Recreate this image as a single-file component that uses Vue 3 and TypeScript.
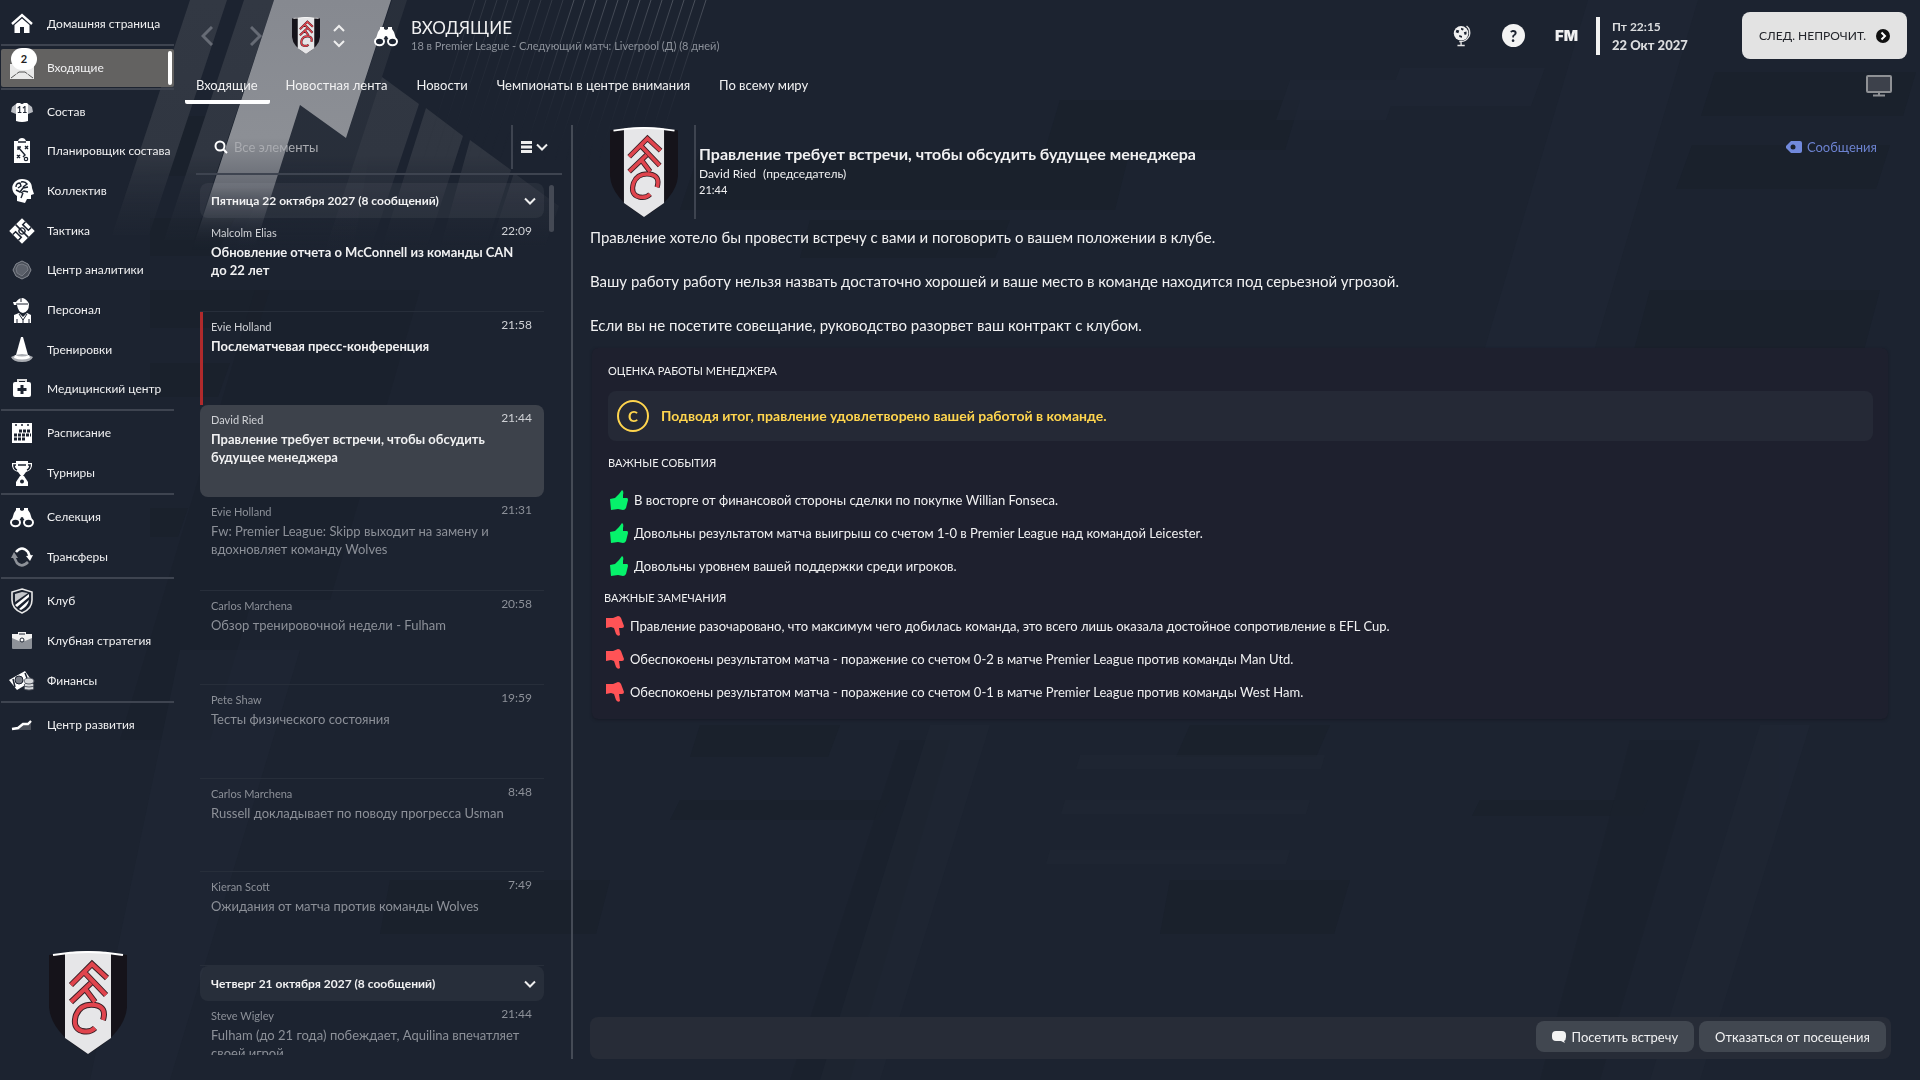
<script setup lang="ts">
import { ref } from 'vue'

interface NavItem { icon: string; label: string; badge?: number }
interface Mail { from: string; time: string; title: string; state: 'unread' | 'urgent' | 'open' | 'read' }
interface MailGroup { title: string; mails: Mail[] }

const navGroups: NavItem[][] = [
  [{ icon: 'home', label: 'Домашняя страница' }],
  [{ icon: 'inbox', label: 'Входящие', badge: 2 }],
  [
    { icon: 'shirt', label: 'Состав' },
    { icon: 'planner', label: 'Планировщик состава' },
    { icon: 'head', label: 'Коллектив' },
    { icon: 'tactics', label: 'Тактика' },
    { icon: 'data', label: 'Центр аналитики' },
    { icon: 'staff', label: 'Персонал' },
    { icon: 'cone', label: 'Тренировки' },
    { icon: 'medical', label: 'Медицинский центр' },
  ],
  [{ icon: 'calendar', label: 'Расписание' }, { icon: 'cup', label: 'Турниры' }],
  [{ icon: 'binoculars', label: 'Селекция' }, { icon: 'transfers', label: 'Трансферы' }],
  [
    { icon: 'club', label: 'Клуб' },
    { icon: 'briefcase', label: 'Клубная стратегия' },
    { icon: 'money', label: 'Финансы' },
  ],
  [{ icon: 'growth', label: 'Центр развития' }],
]

const tabs = ['Входящие', 'Новостная лента', 'Новости', 'Чемпионаты в центре внимания', 'По всему миру']
const activeNav = ref('Входящие')
const activeTab = ref('Входящие')
const query = ref('')

const mailGroups: MailGroup[] = [
  {
    title: 'Пятница 22 октября 2027 (8 сообщений)',
    mails: [
      { from: 'Malcolm Elias', time: '22:09', title: 'Обновление отчета о McConnell из команды CAN до 22 лет', state: 'unread' },
      { from: 'Evie Holland', time: '21:58', title: 'Послематчевая пресс-конференция', state: 'urgent' },
      { from: 'David Ried', time: '21:44', title: 'Правление требует встречи, чтобы обсудить будущее менеджера', state: 'open' },
      { from: 'Evie Holland', time: '21:31', title: 'Fw: Premier League: Skipp выходит на замену и вдохновляет команду Wolves', state: 'read' },
      { from: 'Carlos Marchena', time: '20:58', title: 'Обзор тренировочной недели - Fulham', state: 'read' },
      { from: 'Pete Shaw', time: '19:59', title: 'Тесты физического состояния', state: 'read' },
      { from: 'Carlos Marchena', time: '8:48', title: 'Russell докладывает по поводу прогресса Usman', state: 'read' },
      { from: 'Kieran Scott', time: '7:49', title: 'Ожидания от матча против команды Wolves', state: 'read' },
    ],
  },
  {
    title: 'Четверг 21 октября 2027 (8 сообщений)',
    mails: [
      { from: 'Steve Wigley', time: '21:44', title: 'Fulham (до 21 года) побеждает, Aquilina впечатляет своей игрой', state: 'read' },
    ],
  },
]

const paragraphs = [
  'Правление хотело бы провести встречу с вами и поговорить о вашем положении в клубе.',
  'Вашу работу работу нельзя назвать достаточно хорошей и ваше место в команде находится под серьезной угрозой.',
  'Если вы не посетите совещание, руководство разорвет ваш контракт с клубом.',
]
const praises = [
  'В восторге от финансовой стороны сделки по покупке Willian Fonseca.',
  'Довольны результатом матча выигрыш со счетом 1-0 в Premier League над командой Leicester.',
  'Довольны уровнем вашей поддержки среди игроков.',
]
const complaints = [
  'Правление разочаровано, что максимум чего добилась команда, это всего лишь оказала достойное сопротивление в EFL Cup.',
  'Обеспокоены результатом матча - поражение со счетом 0-2 в матче Premier League против команды Man Utd.',
  'Обеспокоены результатом матча - поражение со счетом 0-1 в матче Premier League против команды West Ham.',
]

const thinLines = Array.from({ length: 22 }, (_, i) => 706 - i * 11)

const bino = '<path d="M7 4h4v2l2 1h0l2-1V4h4v2l2 3 2.500 8h-8v-2h-5v2h-8L5 9l2-3z" fill="#fff"/><g fill="#1c2330" stroke="#fff" stroke-width="2"><ellipse cx="6.500" cy="18.500" rx="4.500" ry="3.700"/><ellipse cx="19.500" cy="18.500" rx="4.500" ry="3.700"/></g><circle cx="13" cy="14.500" r="1.500" fill="#1c2330"/>'
const icons: Record<string, string> = {
  home: '<path d="M3 13 13 4l10 9" fill="none" stroke="#fff" stroke-width="2.400"/><path d="M5.500 14 13 7.500l7.500 6.500v8H15v-6h-4v6H5.500z" fill="#fff"/>',
  inbox: '<path d="M1 9h24v15H1z" fill="#e9e9e9"/><path d="m2 23 8-6m14 6-8-6M10 17h6" stroke="#555" fill="none" stroke-dasharray="6 1"/>',
  shirt: '<path d="M8 4h3q2 2 4 0h3l1 1v17q-6 2-12 0V5z" fill="#fff"/><path d="M7 5 3 8l-1 5 5 2zM19 5l4 3 1 5-5 2z" fill="#b9bcc2"/><text x="13" y="14" text-anchor="middle" font-size="9" font-weight="700" font-family="Lato, sans-serif" fill="#1c2330">11</text>',
  planner: '<path d="M5 3h4q1-3 4-3t4 3h4v22H5z" fill="#fff"/><path d="M9 4h8" stroke="#1c2330" stroke-width="1.500"/><path d="m9 9 7 8-2 2M9 12V9h3m4-1 3 3m0-3-3 3M8 17l3 3m0-3-3 3" stroke="#1c2330" stroke-width="1.400" fill="none"/><circle cx="17" cy="21" r="1.700" fill="none" stroke="#1c2330" stroke-width="1.200"/>',
  head: '<path d="M13 1c7 0 10 4 10 9l2 6-3 1v4h-4l-2 4-8-2v-5C-1 12 4 1 13 1z" fill="#fff"/><g fill="none" stroke="#1c2330" stroke-width="1.400"><path d="M7 9q0-4 4-4l1 3-3 2M12 4q4-1 6 2l-4 3M7 12l4 2 3-4 5-1M12 15l3-2 4 1M14 15l-2 5"/></g>',
  tactics: '<g transform="rotate(-45 13 13)"><path d="M4 4h18v18H4z" fill="#fff"/><path d="M13 4v18M4 9h4v8H4m18-8h-4v8h4" stroke="#1c2330" stroke-width="1.500" fill="none"/><circle cx="13" cy="13" r="3" stroke="#1c2330" fill="none" stroke-width="1.300"/></g>',
  data: '<path d="m13 4 6 3 3 6-3 6-6 3-6-3-3-6 3-6z" fill="#4a4f59" stroke="#878b93"/><path d="m13 7 5 2 1 4-6 6-5-3-1-4 2-4z" fill="#5b606a" stroke="#777b84"/>',
  staff: '<path d="M7 5q6-8 12 0l1 2q0 8-6 9-5-1-6-8H5l-1-3z" fill="#fff"/><path d="M7 7h12M12 1v4" stroke="#1c2330"/><path d="M5 26V18l5-2 4 4 4-4 4 2v8z" fill="#fff"/><path d="m10 17 4 6 4-6m-4 6v3M8 22v4m12-4v4" stroke="#1c2330" fill="none"/>',
  cone: '<path d="M12 0h2l5 18H7z" fill="#fff"/><path d="M2 20q5-3 11-3t11 3q-2 5-11 5T2 20z" fill="#a9acb2"/><path d="M6 18q7 3 14 0l1 3q-8 3-16 0z" fill="#fff"/>',
  medical: '<path d="M9 7V4h8v3" stroke="#ddd" stroke-width="2" fill="none"/><rect x="4" y="6" width="18" height="15" rx="2" fill="#fff"/><path d="M13 9v9m-4.500-4.500h9" stroke="#1c2330" stroke-width="3"/>',
  calendar: '<path d="M3 3h20v20H3z" fill="#fff"/><path d="M6 5h2m4 0h2m4 0h2" stroke="#1c2330" stroke-width="1.500"/><g stroke="#1c2330" stroke-width="3" stroke-dasharray="3 1"><path d="M10 11h12M5 15h17M5 19h11"/></g>',
  cup: '<path d="M7 1h12v2h4q1 7-6 9l-3 4h-2l-3-4Q2 10 3 3h4z" fill="#fff"/><path d="M7 5H5q0 4 3 5m11-5h2q0 4-3 5M9 5h8" fill="none" stroke="#1c2330" stroke-width="1.700"/><path d="M11 16h4l4 6v4H7v-4z" fill="#fff"/><circle cx="13" cy="21.500" r="2" fill="#1c2330"/>',
  binoculars: bino,
  transfers: '<path d="M7 8q6-7 12 0l2 5" stroke="#fff" stroke-width="2.600" fill="none"/><path d="m17 12 7-1-3 6z" fill="#fff"/><path d="M19 18q-6 6-11 1l-3-6" stroke="#8d9198" stroke-width="2.600" fill="none"/><path d="m2 14 3-6 4 6z" fill="#8d9198"/>',
  club: '<path d="m13 1 10 3v8q0 9-10 13Q3 21 3 12V4z" fill="#1c2330" stroke="#e8e8e8" stroke-width="1.600"/><path d="m6 17 14-11v3L8 19zM10 21l10-9q-1 6-8 10z" fill="#fff"/><path d="m6 6 7-2 6 1L6 14z" fill="#c4c6ca"/>',
  briefcase: '<rect x="3" y="6" width="20" height="15" rx="1" fill="#8d9198"/><path d="M9 6V4h8v2h6v4l-7 3h-6l-7-3V6z" fill="#f1f1f1"/><circle cx="13" cy="12" r="2" fill="#fff" stroke="#1c2330"/><path d="M10 6h6" stroke="#1c2330"/>',
  money: '<path d="m0 12 16-9 7 10-15 9z" fill="#fff"/><circle cx="10" cy="12" r="4" fill="#777b84" stroke="#1c2330"/><path d="m4 11 2 8M16 5l2 5" stroke="#1c2330" stroke-width="1.500"/><g fill="#d6d8db" stroke="#555a64"><ellipse cx="20" cy="20" rx="5" ry="2"/><ellipse cx="20" cy="17" rx="5" ry="2"/><ellipse cx="20" cy="13" rx="5" ry="3"/></g>',
  growth: '<path d="m3 17 7-2 5-4h4l3-3v10H3z" fill="#4a4f59"/><path d="m3 17 6-1 5-4h5l3-3" stroke="#fff" stroke-width="2.400" fill="none"/>',
}
</script>

<template>
  <div class="app">
    <svg class="backdrop" viewBox="0 0 1920 1080" preserveAspectRatio="xMinYMin slice" aria-hidden="true">
      <defs>
        <linearGradient id="fadeBand" x1="0" y1="0" x2="0" y2="250" gradientUnits="userSpaceOnUse">
          <stop offset="0" stop-color="#868990" />
          <stop offset=".55" stop-color="#8c8f95" />
          <stop offset=".75" stop-color="#646871" />
          <stop offset="1" stop-color="#1c2330" stop-opacity="0" />
        </linearGradient>
        <linearGradient id="fadeStripe" x1="0" y1="0" x2="0" y2="260" gradientUnits="userSpaceOnUse">
          <stop offset="0" stop-color="#323843" />
          <stop offset=".6" stop-color="#303641" />
          <stop offset="1" stop-color="#1e2532" stop-opacity="0" />
        </linearGradient>
        <linearGradient id="fadeLine" x1="0" y1="0" x2="0" y2="160" gradientUnits="userSpaceOnUse">
          <stop offset="0" stop-color="#4b515c" />
          <stop offset="1" stop-color="#1e2532" stop-opacity="0" />
        </linearGradient>
        <symbol id="crest" viewBox="0 0 78 103">
          <path d="M0 4Q39-3 78 4V56Q76 82 39 103 2 82 0 56z" fill="#15131a" />
          <path d="M16 2Q39-2 62 2V87L39 103 16 87z" fill="#e6e6e8" />
          <path d="M4 4Q39-2 74 4" fill="none" stroke="#fff" stroke-width="2" />
          <path d="M22 34 43 13l15 14M35 21l22 23M22 51 42 32M37 39l9 12M54 69Q58 56 46 54 32 52 27 64q-4 13 6 16 8 2 13-3" fill="none" stroke="#3a2026" stroke-width="6" />
          <path d="M22 34 43 13l15 14M35 21l22 23M22 51 42 32M37 39l9 12M54 69Q58 56 46 54 32 52 27 64q-4 13 6 16 8 2 13-3" fill="none" stroke="#e0444d" stroke-width="4" />
        </symbol>
      </defs>
      <g fill="#19202a" opacity=".6">
        <path d="M150 116h95l-22 60h-73zM150 218h85l-20 38h-65zM150 290h120l-12 38H150zM150 363h80l-12 34h-68zM150 508h38l-10 29h-28z" />
        <path d="M255 290h90L210 740h-90zM340 290h80L330 600h-80z" opacity=".6" />
        <path d="M700 150h430l-15 60H680zM810 220h200l-15 38H800zM1060 100h240l-15 50h-240zM1715 72h201l-13 44h-202zM1692 145h198l-14 44h-200zM1650 290h230l-16 60h-230z" />
        <path d="M700 725h140l-12 32H690zM680 800h210l-12 20H670zM1190 725h140l-14 32h-140zM1480 800h168l-6 16h-170zM1170 880h180l-16 54h-174zM390 880h220l-14 54H380z" />
        <path d="M900 740h50L850 1080h-60zM1630 740h70l-100 340h-60z" opacity=".5" />
      </g>
      <g fill="#202835" opacity=".5">
        <path d="M1588 0h110l-160 540h-110zM1290 80h110l-14 40h-110zM1400 68h145l-14 38h-145zM180 650h120L170 1080H90z" />
        <path d="M1080 755h245l-4 14h-245zM1065 800h245l-4 14h-245zM1050 850h240l-4 14h-240z" />
        <path d="M930 725h60l-110 355h-60zM1760 725h50l-110 355h-50z" />
      </g>
      <path d="M190 0h37l-78 235h-37z" fill="url(#fadeStripe)" />
      <path d="M244 0h30l-80 240h-30z" fill="url(#fadeStripe)" />
      <path d="M346 138 392 0h15l-25 77-30 180h-120l68-152z" fill="url(#fadeStripe)" opacity=".6" />
      <path d="m382 77 37 27-50 150h-45zM426 108l37 28-39 120h-45zM470 140l41 30-28 86h-45zM514 173l45 33-14 40h-55z" fill="url(#fadeStripe)" />
      <path d="M274 0h117l-45 138-46-33-46 145h-62z" fill="url(#fadeBand)" />
      <path v-for="x in thinLines" :key="x" :d="`M${x} 0l-52 160`" stroke="url(#fadeLine)" :opacity="x > 570 ? 1 : 0.5" />
    </svg>

    <aside class="sidebar">
      <nav>
        <ul v-for="(group, g) in navGroups" :key="g" class="nav-group" :class="{ squad: group.length > 5 }">
          <li v-for="item in group" :key="item.label">
            <a href="#" class="nav-link" :class="{ active: item.label === activeNav }" @click.prevent="activeNav = item.label">
              <svg class="nav-icon" viewBox="0 0 26 26" aria-hidden="true" v-html="icons[item.icon]"></svg>
              <span v-if="item.badge" class="badge">{{ item.badge }}</span>
              <span>{{ item.label }}</span>
            </a>
          </li>
        </ul>
      </nav>
      <svg class="side-crest" viewBox="0 0 78 103" aria-hidden="true"><use href="#crest" /></svg>
    </aside>

    <div class="main">
      <header class="topbar">
        <div class="history">
          <button type="button" aria-label="Назад"><svg viewBox="0 0 12 20"><path d="M11 1 2 10l9 9" /></svg></button>
          <button type="button" aria-label="Вперёд"><svg viewBox="0 0 12 20"><path d="m1 1 9 9-9 9" /></svg></button>
        </div>
        <svg class="top-crest" viewBox="0 0 78 103" aria-hidden="true"><use href="#crest" /></svg>
        <button type="button" class="switcher" aria-label="Сменить клуб">
          <svg viewBox="0 0 12 24"><path d="m1 7 5-5 5 5M1 17l5 5 5-5" /></svg>
        </button>
        <svg class="top-bino" viewBox="0 0 26 26" aria-hidden="true" v-html="icons.binoculars"></svg>
        <div class="heading">
          <h1>ВХОДЯЩИЕ</h1>
          <p>18 в Premier League - Следующий матч: Liverpool (Д) (8 дней)</p>
        </div>
        <div class="tools">
          <button type="button" aria-label="Мир">
            <svg viewBox="0 0 22 24" width="20" height="22"><circle cx="10" cy="9" r="8" fill="#f1f1f1" /><path d="M5 5l3 1-1 3-3-1zM10 3l3 1-1 2-2-1zM8 11l3 1v2l-3-1zM13 8l3-1v3l-2 1z" fill="#1c2330" /><path d="M16 1q5 4 3 11-4 7-11 6M10 18v4M6 22.500h8" stroke="#e4e4e4" stroke-width="1.500" fill="none" /></svg>
          </button>
          <button type="button" class="help" aria-label="Справка">?</button>
          <button type="button" class="fm">FM</button>
        </div>
        <div class="date">
          <span>Пт 22:15</span>
          <strong>22 Окт 2027</strong>
        </div>
        <button type="button" class="next">
          СЛЕД. НЕПРОЧИТ.
          <svg viewBox="0 0 14 14"><circle cx="7" cy="7" r="7" fill="#111" /><path d="m5.500 3.500 3.500 3.500-3.500 3.500" stroke="#fff" stroke-width="2" fill="none" /></svg>
        </button>
      </header>

      <nav class="tabs">
        <a v-for="tab in tabs" :key="tab" href="#" :class="{ active: tab === activeTab }" @click.prevent="activeTab = tab">{{ tab }}</a>
        <svg class="monitor" viewBox="0 0 26 22" aria-hidden="true"><rect x="1" y="1" width="24" height="16" rx="1" fill="#3d414b" stroke="#8f9195" stroke-width="2" /><path d="M13 17v3M7 20.500h12" stroke="#8f9195" stroke-width="2" /></svg>
      </nav>

      <div class="columns">
        <section class="inbox">
          <div class="search">
            <label class="search-field">
              <svg viewBox="0 0 14 14"><circle cx="6" cy="6" r="4.500" /><path d="m9 9 4 4" /></svg>
              <input v-model="query" type="text" placeholder="Все элементы" aria-label="Все элементы" />
            </label>
            <button type="button" class="filter" aria-label="Фильтр">
              <svg viewBox="0 0 28 12"><path d="M1 1.500h11M1 6h11M1 10.500h11" stroke-width="3" /><path d="m17 3.500 5 5 5-5" /></svg>
            </button>
          </div>
          <div class="scroller">
            <div class="groups">
              <section v-for="group in mailGroups" :key="group.title">
                <button type="button" class="group-head">
                  {{ group.title }}
                  <svg viewBox="0 0 12 8"><path d="m1 1.500 5 5 5-5" /></svg>
                </button>
                <ul class="mails" :class="{ full: group.mails.length > 1 }">
                  <li v-for="mail in group.mails" :key="mail.time" :class="['mail', mail.state]">
                    <div class="meta"><span class="from">{{ mail.from }}</span><time>{{ mail.time }}</time></div>
                    <h3>{{ mail.title }}</h3>
                  </li>
                </ul>
              </section>
            </div>
            <div class="track"><div class="thumb"></div></div>
          </div>
        </section>

        <article class="letter">
          <header class="letter-head">
            <svg class="letter-crest" viewBox="0 0 78 103" aria-hidden="true"><use href="#crest" /></svg>
            <div class="letter-title">
              <h2>Правление требует встречи, чтобы обсудить будущее менеджера</h2>
              <p class="author"><span>David Ried</span><span>(председатель)</span></p>
              <time>21:44</time>
            </div>
            <a href="#" class="tag" @click.prevent>
              <svg viewBox="0 0 16 12"><path d="M5 0h9q2 0 2 2v8q0 2-2 2H5L0 7V5z" fill="#7189dc" /><circle cx="7" cy="6" r="2.500" fill="#1a202c" /></svg>
              Сообщения
            </a>
          </header>
          <div class="body">
            <p v-for="text in paragraphs" :key="text">{{ text }}</p>
          </div>
          <section class="review">
            <h4>ОЦЕНКА РАБОТЫ МЕНЕДЖЕРА</h4>
            <div class="verdict">
              <span class="grade">C</span>
              <strong>Подводя итог, правление удовлетворено вашей работой в команде.</strong>
            </div>
            <h4 class="events-title">ВАЖНЫЕ СОБЫТИЯ</h4>
            <ul class="events">
              <li v-for="text in praises" :key="text">
                <svg viewBox="0 0 20 20"><path d="m1 9 5-1 4-4 3-4q2 1 1 5v3h4q1 0 1 2l-2 8q-1 2-3 2L9 19l-7 1z" fill="#06f26b" /></svg>{{ text }}
              </li>
            </ul>
            <div class="concerns">
              <h4>ВАЖНЫЕ ЗАМЕЧАНИЯ</h4>
              <ul class="events">
                <li v-for="text in complaints" :key="text">
                  <svg viewBox="0 0 20 20"><path d="m1 2 7 0 5-2q2 0 3 2l3 8q0 2-2 2h-3l1 7q-2 2-4-1l-2-6-3-1-5 1z" fill="#ff5356" /></svg>{{ text }}
                </li>
              </ul>
            </div>
          </section>
          <footer class="actions">
            <button type="button">
              <svg viewBox="0 0 14 12"><path d="M4 0h6q4 0 4 4v2q0 3-2 4l1 2-4-2H4Q0 10 0 6V4q0-4 4-4z" fill="#f3f3f3" /></svg>
              Посетить встречу
            </button>
            <button type="button">Отказаться от посещения</button>
          </footer>
        </article>
      </div>
    </div>
  </div>
</template>

<style>
html,
body,
#app {
  height: 100%;
}
body {
  margin: 0;
  background: #1c2330;
}
</style>

<style scoped>
.app {
  position: relative;
  display: flex;
  min-height: 100%;
  overflow: hidden;
  background: #1c2330;
  color: #f1f1f2;
  font-family: Lato, "Open Sans", sans-serif;
  font-size: 13px;
  line-height: 18px;
}
.backdrop {
  position: absolute;
  inset: 0;
  width: 100%;
  height: 100%;
}
h1, h2, h3, h4, p, ul {
  margin: 0;
  padding: 0;
  font-weight: 400;
}
ul { list-style: none; }
a { color: inherit; text-decoration: none; }
button {
  padding: 0;
  border: 0;
  background: none;
  color: inherit;
  font: inherit;
  cursor: pointer;
}
button svg { display: block; }

.sidebar {
  position: relative;
  display: flex;
  flex: none;
  flex-direction: column;
  justify-content: space-between;
  width: 174px;
  padding: 4px 0 26px 1px;
  box-sizing: border-box;
  font-size: 12px;
}
.nav-group {
  display: flex;
  flex-direction: column;
}
.nav-group + .nav-group {
  padding-top: 2px;
  border-top: 2px solid #3e4450;
}
.nav-group.squad { height: 317px; }
.nav-group li { flex: 1 1 40px; min-height: 0; }
.nav-link {
  position: relative;
  display: flex;
  align-items: center;
  height: 100%;
  padding-left: 4px;
  white-space: nowrap;
}
.nav-icon {
  flex: none;
  width: 26px;
  height: 26px;
  margin: 0 12px 0 4px;
}
.nav-link.active {
  height: 38px;
  margin: 1px 0;
  border-radius: 2px;
  background: #636261;
}
.nav-link.active::after {
  position: absolute;
  top: 2px;
  right: 2px;
  width: 4px;
  height: 34px;
  border-radius: 3px;
  background: #fff;
  content: '';
}
.badge {
  position: absolute;
  top: -1px;
  left: 10px;
  width: 26px;
  height: 22px;
  border-radius: 12px;
  background: #fff;
  color: #222;
  font-size: 11px;
  font-weight: 700;
  line-height: 22px;
  text-align: center;
}
.side-crest {
  width: 78px;
  height: 103px;
  margin-left: 48px;
}

.main {
  position: relative;
  display: flex;
  flex: 1;
  flex-direction: column;
  min-width: 0;
}
.topbar {
  display: flex;
  align-items: center;
  height: 71px;
  padding: 0 13px 0 27px;
}
.history { display: flex; gap: 37px; }
.history svg { width: 12px; height: 20px; fill: none; stroke: #666b75; stroke-width: 3; }
.top-crest { width: 28px; height: 37px; margin-left: 30px; }
.switcher { margin-left: 13px; }
.switcher svg { width: 12px; height: 24px; fill: none; stroke: #eee; stroke-width: 2; }
.top-bino { width: 26px; height: 26px; margin: 0 12px 0 28px; }
.heading h1 { font-size: 17px; line-height: 20px; }
.heading p { color: #8d929b; font-size: 11px; line-height: 16px; }
.tools { display: flex; align-items: center; gap: 30px; margin-left: auto; }
.help {
  width: 23px;
  height: 23px;
  border-radius: 50%;
  background: #f3f3f3;
  color: #1c2330;
  font-size: 16px;
  font-weight: 900;
  line-height: 23px;
}
.fm { font-family: Inter, Lato, sans-serif; font-size: 15px; font-weight: 900; }
.date {
  display: flex;
  flex-direction: column;
  width: 130px;
  margin-left: 18px;
  padding-left: 12px;
  border-left: 4px solid #f3f3f3;
  color: #dcdddf;
  font-size: 12px;
  font-weight: 700;
  line-height: 19px;
}
.date strong { font-size: 13px; }
.next {
  display: flex;
  align-items: center;
  justify-content: center;
  gap: 10px;
  width: 165px;
  height: 47px;
  border-radius: 8px;
  background: #e3e3e3;
  color: #23252b;
  font-size: 12px;
}
.next svg { width: 14px; height: 14px; }

.tabs {
  display: flex;
  align-items: flex-start;
  height: 33px;
  padding: 0 28px 0 11px;
}
.tabs a {
  height: 29px;
  margin-right: 1px;
  padding: 0 14px;
  line-height: 29px;
}
.tabs a:first-child { margin-right: 2px; padding: 0 12px 0 11px; }
.tabs a.active { border-bottom: 4px solid #fff; border-radius: 2px; }
.monitor { width: 26px; height: 22px; margin: 4px 0 0 auto; }

.columns {
  display: flex;
  flex: 1;
  padding: 21px 29px 21px 22px;
}
.inbox {
  display: flex;
  flex: none;
  flex-direction: column;
  width: 375px;
  border-right: 2px solid #454b56;
}
.search {
  display: flex;
  width: 366px;
  height: 44px;
  padding-bottom: 4px;
  border-bottom: 2px solid #3e4450;
}
.search-field { display: flex; align-items: center; width: 315px; border-right: 2px solid #3e4450; }
.search-field svg {
  flex: none;
  width: 14px;
  height: 14px;
  margin: 0 6px 0 18px;
  fill: none;
  stroke: #fff;
  stroke-width: 2;
}
.search-field input {
  width: 240px;
  padding: 0;
  border: 0;
  outline: 0;
  background: none;
  color: #eee;
  font: inherit;
}
.search-field input::placeholder { color: #a9abb0; opacity: 1; }
.filter { flex: 1; padding-left: 7px; }
.filter svg { width: 28px; height: 12px; fill: none; stroke: #eee; stroke-width: 2; }
.scroller {
  display: flex;
  flex: 1 1 0;
  gap: 5px;
  min-height: 0;
  margin-top: 8px;
  overflow: hidden;
}
.groups { width: 344px; height: 872px; margin-left: 4px; overflow: hidden; }
.group-head {
  display: flex;
  align-items: center;
  justify-content: space-between;
  width: 100%;
  height: 35px;
  padding: 0 8px 0 11px;
  border-radius: 8px;
  background: rgba(255, 255, 255, 0.05);
  font-size: 12px;
  font-weight: 700;
}
.group-head svg { width: 12px; height: 8px; fill: none; stroke: #eee; stroke-width: 2; }
.mails { display: flex; flex-direction: column; }
.mails.full { height: 748px; }
.mail {
  flex: 1;
  min-height: 0;
  box-sizing: border-box;
  padding: 5px 12px 0 11px;
  border-bottom: 1px solid #272e3a;
}
.meta { display: flex; justify-content: space-between; font-size: 11px; line-height: 20px; color: #cfd1d5; }
.meta time { font-size: 12px; line-height: 15px; }
.mail h3 { padding-right: 8px; font-size: 13px; line-height: 18px; }
.mail.unread h3, .mail.urgent h3, .mail.open h3 { font-weight: 700; }
.mail.urgent { padding-left: 8px; border-left: 3px solid #b02a2c; border-bottom: 0; }
.mail.open { border-bottom: 0; border-radius: 8px; background: #3d424b; }
.mail.read, .mail.read .meta { color: #8c9098; }
.track { width: 5px; padding-top: 2px; }
.thumb { height: 47px; border-radius: 3px; background: #444954; }

.letter {
  display: flex;
  flex: 1;
  flex-direction: column;
  min-width: 0;
  padding-left: 17px;
}
.letter-head { display: flex; height: 94px; }
.letter-crest { width: 68px; height: 90px; margin: 2px 16px 0 20px; }
.letter-title { padding: 18px 0 0 3px; border-left: 2px solid #3e4450; }
.letter-title h2 { font-size: 16px; font-weight: 700; line-height: 22px; }
.author { display: flex; gap: 7px; font-size: 12px; }
.letter-title time { display: block; font-size: 11px; line-height: 14px; }
.tag {
  display: flex;
  align-items: center;
  gap: 5px;
  height: 18px;
  margin: 13px 14px 0 auto;
  color: #6c82d0;
}
.tag svg { width: 16px; height: 12px; }
.body { display: flex; flex-direction: column; gap: 22px; margin-top: 7px; }
.body p { font-size: 15px; line-height: 22px; }
.review {
  margin: 12px 3px 0 2px;
  padding: 14px 15px 11px 16px;
  border-radius: 6px;
  background: #1e202e;
  box-shadow: 0 1px 3px #171b26;
}
.review h4 { font-size: 11px; line-height: 18px; }
.verdict {
  display: flex;
  align-items: center;
  gap: 12px;
  height: 50px;
  margin: 11px 0 13px;
  padding-left: 9px;
  border-radius: 8px;
  background: #252936;
  color: #ffd54e;
  font-size: 14px;
}
.grade {
  width: 28px;
  height: 28px;
  border: 2px solid #ffd54e;
  border-radius: 50%;
  font-size: 15px;
  font-weight: 700;
  line-height: 28px;
  text-align: center;
}
.events-title { margin-bottom: 11px; }
.events li { display: flex; align-items: center; gap: 5px; height: 33px; }
.events svg { width: 20px; height: 20px; margin-left: 1px; }
.concerns { margin: 7px 0 0 -4px; }
.concerns .events { margin-top: 2px; }
.actions {
  display: flex;
  justify-content: flex-end;
  gap: 5px;
  margin-top: auto;
  padding: 4px 5px 7px;
  border-radius: 8px;
  background: #272c37;
}
.actions button {
  display: flex;
  align-items: center;
  gap: 6px;
  height: 31px;
  padding: 0 16px;
  border-radius: 8px;
  background: #414750;
}
.actions svg { width: 14px; height: 12px; }
</style>
